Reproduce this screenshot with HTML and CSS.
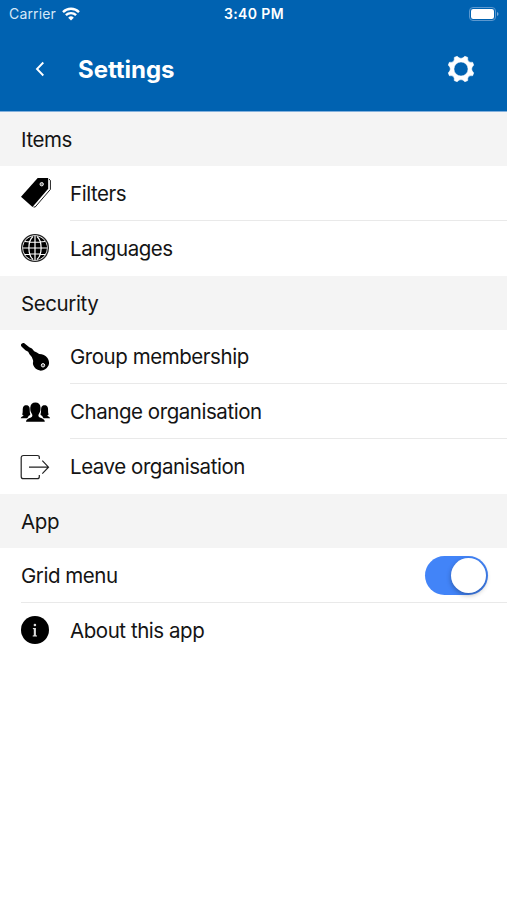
FILE: index.html
```html
<!DOCTYPE html>
<html lang="en">
<head>
  <meta charset="UTF-8" />
  <meta name="viewport" content="width=device-width, initial-scale=1.0"/>
  <title>Settings</title>
  <link rel="stylesheet" href="styles.css">
</head>
<body>
  <header>
    <div class="status">
      <div class="carrier">
        <span>Carrier</span>
        <svg width="18" height="14" viewBox="0 0 18 14" fill="none" stroke="#fff" stroke-width="2.4">
          <path d="M1 5.1a11.4 11.4 0 0 1 16 0M3.9 8.2a7.3 7.3 0 0 1 10.2 0"/>
          <path d="M9 13.6L6.2 10.7a4 4 0 0 1 5.6 0z" fill="#fff" stroke="none"/>
        </svg>
      </div>
      <span class="time">3:40 PM</span>
      <svg class="battery" width="30" height="14" viewBox="0 0 30 14">
        <rect x="0.5" y="0.5" width="26" height="13" rx="3.5" fill="none" stroke="#5c98cf"/>
        <rect x="2" y="2" width="23" height="10" rx="2.2" fill="#fff"/>
        <path d="M28 5v4q1.5-.6 1.5-2T28 5z" fill="#78aad8"/>
      </svg>
    </div>
    <div class="bar">
      <svg class="back" width="10" height="16" viewBox="0 0 10 16" fill="none" stroke="#fff" stroke-width="1.9">
        <path d="M8.3 1.5L2 8l6.3 6.5"/>
      </svg>
      <h1>Settings</h1>
      <svg class="gear" width="28" height="28" viewBox="-14 -14 28 28">
        <path fill="#fff" stroke="#fff" stroke-width=".6" stroke-linejoin="round" fill-rule="evenodd" d="M-3.9-12.7Q0-8.5 3.9-12.7L6.7-11.6Q6-6 11.6-6.7L12.7-3.9Q8.5 0 12.7 3.9L11.6 6.7Q6 6 6.7 11.6L3.9 12.7Q0 8.5-3.9 12.7L-6.7 11.6Q-6 6-11.6 6.7L-12.7 3.9Q-8.5 0-12.7-3.9L-11.6-6.7Q-6-6-6.7-11.6zM7.1 0A7.1 7.1 0 1 0-7.1 0A7.1 7.1 0 1 0 7.1 0z"/>
      </svg>
    </div>
  </header>

  <main>
    <h2>Items</h2>
    <div class="row">
      <svg class="icon" viewBox="0 0 32 32">
        <path d="M18.7 1h10.5v10.7L13.5 30 2 19.8z"/>
        <path d="M30 2.2l1.4 1.2v9L16.2 30h-1.7" fill="none" stroke="#000" stroke-width=".9"/>
        <circle cx="22.7" cy="7.2" r="1.7" fill="#777" stroke="#fff" stroke-width=".9"/>
      </svg>
      <div class="label line">Filters</div>
    </div>
    <div class="row">
      <svg class="icon" viewBox="0 0 32 32">
        <circle cx="16" cy="16" r="13.4" fill="#fff" stroke="#222" stroke-width="1.3"/>
        <circle cx="16" cy="16" r="12"/>
        <path d="M16 4v24M4 16h24M6 9.5q10 1.5 20 0M6 22.5q10-1.5 20 0M14 4.5C8.500 9 8.500 23 14 27.500M18 4.500c5.500 4.500 5.500 18.500 0 23" fill="none" stroke="#fff" stroke-width="1.2"/>
      </svg>
      <div class="label">Languages</div>
    </div>

    <h2>Security</h2>
    <div class="row">
      <svg class="icon" viewBox="0 0 32 32">
        <path d="M2 3.500q.8-1.900 3-1.500l5.300 4.200 2.600 1.200 2.300 2.800 2.700 1.300 4.500 3-7.500 7-2.100-5.500-2.300-2.800-1.300-2.400-2.800-1.500L2.700 5.700q-1-1-.7-2.200z"/>
        <path d="M14.500 15.500q2-2.500 5.500-2.500 5.500 0 8.500 4 2.500 4 1 7.500-3 5.500-8.500 5.100-5-1-6.800-5.600-.6-2.500.3-4.500z"/>
        <circle cx="24" cy="24.300" r="1.700" fill="#555" stroke="#fff" stroke-width="1"/>
      </svg>
      <div class="label line">Group membership</div>
    </div>
    <div class="row">
      <svg class="icon" viewBox="0 0 32 32">
        <path id="side" d="M1.7 22.300c.2-1.500 1.600-1.900 3.100-2.600-1-.5-1.500-.7-1.500-1.500.8-2 .1-4.700.7-6.700.5-1.600 1.700-2.200 3.200-2.200s2.800.6 3.300 2.200c.5 2-.1 4.700.8 6.700 0 .8-.5 1-1.500 1.500l-1.500 2.600z"/>
        <use href="#side" transform="matrix(-1 0 0 1 32.800 0)"/>
        <path d="M7 25.800c0-2.500 2-3.300 5-4.400 1.700-.8 1.700-2.200.8-3.700-1.200-1.900-1.700-3.500-1.500-6.200.3-3.300 2.100-4.900 5.100-4.900s4.900 1.600 5.100 4.900c.2 2.700-.3 4.300-1.500 6.200-.9 1.500-.9 2.900.8 3.700 3 1.100 5 1.900 5 4.400z"/>
      </svg>
      <div class="label line">Change organisation</div>
    </div>
    <div class="row">
      <svg class="icon" viewBox="0 0 32 32" fill="none" stroke="#222" stroke-width="1.2">
        <path d="M20.300 8V6.500q0-2-2-2H4.500q-2.300 0-2.300 2.300v18.600q0 2.300 2.300 2.300h13.800q2 0 2-2V24M10 16.200h19.300M23.300 9.700l6.200 6.500-6.200 6.400"/>
      </svg>
      <div class="label">Leave organisation</div>
    </div>

    <h2>App</h2>
    <div class="row">
      <div class="label line wide">
        <span>Grid menu</span>
        <div class="toggle"><div class="knob"></div></div>
      </div>
    </div>
    <div class="row">
      <svg class="icon" viewBox="0 0 32 32">
        <circle cx="16" cy="16" r="14"/>
        <circle cx="15.900" cy="11" r="1.300" fill="#ddd"/>
        <path d="M13.900 14h3v7.200l1.100.3v.9h-4.300v-.9l1.100-.3v-5.900l-.9-.4z" fill="#ddd"/>
      </svg>
      <div class="label">About this app</div>
    </div>
  </main>
</body>
</html>
```

FILE: styles.css
```css
body {
  font-family: Inter, "Liberation Sans", sans-serif;
  background-color: #ffffff;
  color: #141414;
  margin: 0;
}
header {
  height: 111px;
  background: #0062b1;
  border-bottom: 1px solid #82b0dc;
  color: #ffffff;
}
.status {
  display: grid;
  grid-template-columns: 1fr auto 1fr;
  align-items: center;
  height: 27px;
  padding: 0 8px 0 9px;
  font-size: 14px;
}
.carrier {
  display: flex;
  align-items: center;
  gap: 6px;
  color: #d5e8f8;
  letter-spacing: 0.15px;
}
.time {
  font-weight: 600;
  letter-spacing: 0.4px;
}
.battery {
  justify-self: end;
}
.bar {
  display: flex;
  align-items: center;
  height: 84px;
  padding: 0 32px 0 35px;
}
h1 {
  flex: 1;
  margin: 0 0 0 33px;
  font-size: 24px;
  font-weight: 700;
  letter-spacing: -0.05px;
}
h2 {
  margin: 0;
  padding-left: 21px;
  height: 54px;
  line-height: 55px;
  background: #f4f4f4;
  font-size: 20.5px;
  font-weight: 400;
  letter-spacing: -0.4px;
}
.row {
  display: flex;
  align-items: center;
  height: 54.8px;
  padding-left: 19px;
  font-size: 20.5px;
  letter-spacing: -0.45px;
}
.icon {
  width: 32px;
  height: 32px;
  margin-right: 19px;
}
.label {
  flex: 1;
  display: flex;
  align-items: center;
  box-sizing: border-box;
  height: 54.8px;
}
.line {
  padding-top: 1px;
  border-bottom: 1px solid #e9e9e9;
}
.wide {
  justify-content: space-between;
  margin-left: 2px;
  padding-right: 19px;
}
.toggle {
  display: flex;
  justify-content: flex-end;
  box-sizing: border-box;
  width: 63px;
  height: 39px;
  padding: 2px;
  border-radius: 20px;
  background: #4284f8;
}
.knob {
  width: 35px;
  height: 35px;
  border-radius: 50%;
  background: #ffffff;
  box-shadow: 0 2px 5px rgba(0, 0, 0, 0.3);
}
```
